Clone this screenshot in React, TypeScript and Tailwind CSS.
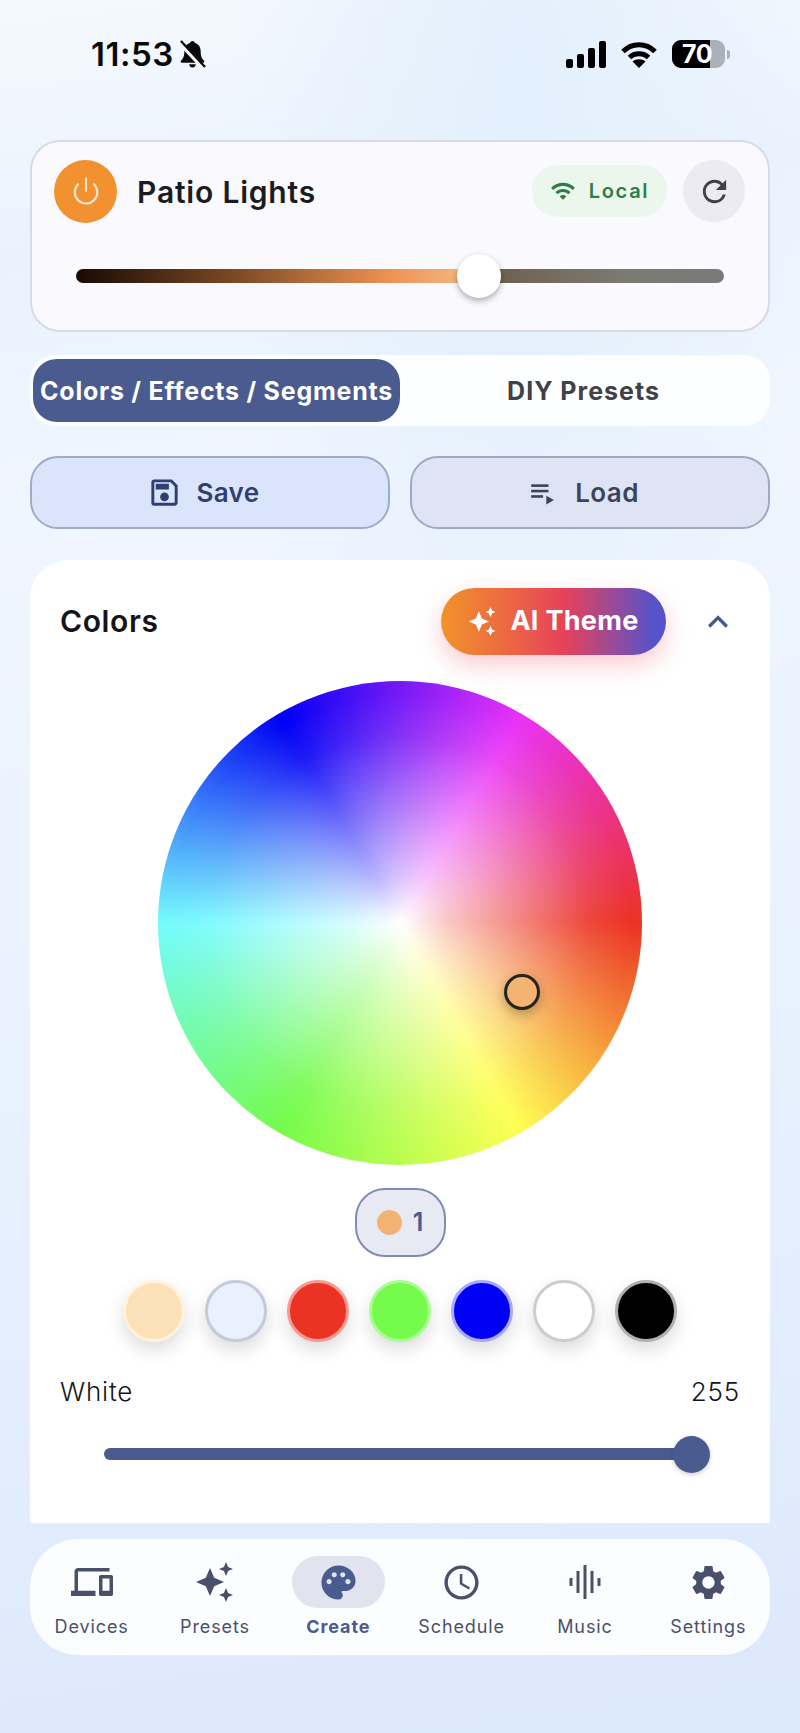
import React from "react";
import { MdDevices, MdPalette, MdSettings, MdOutlineSchedule, MdOutlineSave, MdRefresh, MdWifi, MdKeyboardArrowUp } from "react-icons/md";
import { Power } from "lucide-react";

const Star = ({ cx, cy, r }: { cx: number; cy: number; r: number }) => {
  const k = r * 0.3;
  return <path d={`M${cx} ${cy - r}L${cx + k} ${cy - k}L${cx + r} ${cy}L${cx + k} ${cy + k}L${cx} ${cy + r}L${cx - k} ${cy + k}L${cx - r} ${cy}L${cx - k} ${cy - k}Z`} />;
};

const Sparkles = ({ className }: { className: string }) => (
  <svg viewBox="0 0 40 40" fill="currentColor" className={className}>
    <Star cx={15} cy={20} r={14} />
    <Star cx={31} cy={7} r={7} />
    <Star cx={31} cy={33} r={7} />
  </svg>
);

const BellSlash = () => (
  <svg viewBox="0 0 28 30" className="w-[27px] h-[29px]" fill="#0a0a0a">
    <path d="M14 1c1.5 0 2.4 1 2.6 2.2C20.6 4.3 22.5 7.6 22.5 12c0 5 1.3 7.4 3.5 9.6.6.7.2 1.9-.9 1.9H2.900c-1.100 0-1.500-1.200-.9-1.900C4.200 19.400 5.500 17 5.500 12c0-4.400 1.900-7.700 5.900-8.800C11.600 2 12.500 1 14 1z" />
    <path d="M10.500 25h7c-.3 2-1.700 3.500-3.500 3.500S10.800 27 10.500 25z" />
    <path d="M0.500 2 L25.500 29" stroke="#f2f8fe" strokeWidth="5" />
    <path d="M2 1 L27 28" stroke="#0a0a0a" strokeWidth="2.400" />
  </svg>
);

const Swatch = ({ fill, ring }: { fill: string; ring: string }) => (
  <div className={`w-[62px] h-[62px] rounded-full border-[3px] shadow-[0_8px_18px_rgba(0,0,0,0.14)] ${fill} ${ring}`} />
);

const NavItem = ({ label, active, children }: { label: string; active?: boolean; children: React.ReactNode }) => (
  <div className="flex flex-col items-center w-[123.5px]">
    <div className={`w-[93px] h-[52px] rounded-full flex items-center justify-center ${active ? "bg-[#e1e4ee] text-[#4a5b8f]" : "text-[#4a5069]"}`}>
      {children}
    </div>
    <span className={`mt-[7px] text-[18px] leading-[24px] tracking-[0.9px] ${active ? "font-bold text-[#4a5b8f]" : "font-normal text-[#4a5069]"}`}>
      {label}
    </span>
  </div>
);

export default function App() {
  return (
    <div className="w-[800px] h-[1733px] overflow-hidden px-[30px] bg-[radial-gradient(ellipse_at_65%_6%,#e2effc_0%,rgba(226,239,252,0)_38%),linear-gradient(172deg,#f4f9fe_0%,#eaf3fd_14%,#eff6ff_28%,#e8f1fe_60%,#dce8fb_100%)] font-['Inter','Liberation_Sans',sans-serif]">
      {/* status bar */}
      <div className="h-[140px] pt-[36px] pl-[61px] pr-[40px] flex justify-between items-start">
        <div className="flex items-center gap-[5px] h-[36px]">
          <span className="text-[33px] leading-[36px] font-semibold text-[#0a0a0a] tracking-[0.5px]">11:53</span>
          <BellSlash />
        </div>
        <div className="flex items-center h-[36px]">
          <svg viewBox="0 0 41 27" className="w-[41px] h-[27px]" fill="#000">
            <rect x="0" y="18" width="7" height="9" rx="2" />
            <rect x="11" y="13" width="7" height="14" rx="2" />
            <rect x="22" y="7" width="7" height="20" rx="2" />
            <rect x="33" y="0" width="7" height="27" rx="2" />
          </svg>
          <svg viewBox="0 0 36 27" className="w-[36px] h-[27px] ml-[14px]" fill="none" stroke="#000">
            <path d="M2 10.500C11 1.500 25 1.500 34 10.500" strokeWidth="5" />
            <path d="M8.500 16.500C13.500 11.500 22.500 11.500 27.500 16.500" strokeWidth="5" />
            <path d="M18 27L11.500 20.500C15 17.500 21 17.500 24.500 20.500Z" fill="#000" stroke="none" />
          </svg>
          <div className="ml-[15px] w-[53px] h-[28px] rounded-[9px] overflow-hidden relative bg-[#aab1ba] flex">
            <div className="w-[38px] h-full bg-black" />
            <span className="absolute left-[10px] top-0 text-[25px] leading-[28px] font-bold text-white tracking-[-0.5px]">70</span>
          </div>
          <div className="ml-[2px] w-[3px] h-[9px] rounded-r-full bg-[#aab1ba]" />
        </div>
      </div>

      {/* device card */}
      <div className="h-[192px] rounded-[30px] border-2 border-[#d6dbe8] bg-[#f9f9fe] pt-[18px] pl-[22px] pr-[23px]">
        <div className="flex items-center h-[62px]">
          <div className="w-[63px] h-[63px] rounded-full bg-[#f19130] flex items-center justify-center">
            <Power className="w-[30px] h-[30px] text-[#fbe7cf]" strokeWidth={1.7} />
          </div>
          <span className="ml-[20px] pt-[2px] text-[30px] font-semibold text-[#1b1c22] tracking-[0.8px]">Patio Lights</span>
          <div className="ml-auto w-[135px] h-[52px] rounded-full bg-[#ebf6ed] flex items-center justify-center gap-[13px] text-[#2f7d46]">
            <MdWifi className="w-[26px] h-[26px]" />
            <span className="text-[20px] font-semibold tracking-[1.7px]">Local</span>
          </div>
          <div className="ml-[16px] w-[62px] h-[62px] rounded-full bg-[#ecebf2] flex items-center justify-center text-[#3f4146]">
            <MdRefresh className="w-[35px] h-[35px]" />
          </div>
        </div>
        <div className="relative mt-[47px] ml-[22px] w-[648px] h-[14px] rounded-full bg-[linear-gradient(90deg,#170b03_0%,#7a4822_24%,#ec9150_48%,#f3b681_60%,#6d5a46_60%,#7b7b73_85%,#7a7a7a_100%)]">
          <div className="absolute left-[381px] top-[-15px] w-[44px] h-[44px] rounded-full bg-white shadow-[0_3px_6px_rgba(0,0,0,0.3)]" />
        </div>
      </div>

      {/* tabs */}
      <div className="mt-[23px] h-[71px] rounded-[26px] bg-white/90 p-[3px] pt-[4px] flex">
        <div className="w-[367px] h-[63px] pt-[2px] rounded-[24px] bg-[#4a5b8f] text-white flex items-center justify-center text-[25px] font-bold tracking-[0.75px] whitespace-nowrap">
          Colors / Effects / Segments
        </div>
        <div className="flex-1 h-[63px] pt-[2px] flex items-center justify-center text-[25px] font-bold text-[#404247] tracking-[1px]">
          DIY Presets
        </div>
      </div>

      {/* save / load */}
      <div className="mt-[30px] flex gap-[20px]">
        <div className="w-[360px] h-[73px] rounded-[28px] border-2 border-[#9eabc9] bg-[#dae4fa] flex items-center justify-center gap-[14px] pr-[13px] text-[#2f3f73]">
          <MdOutlineSave className="w-[35px] h-[35px]" />
          <span className="text-[26px] font-semibold tracking-[0.4px]">Save</span>
        </div>
        <div className="w-[360px] h-[73px] rounded-[28px] border-2 border-[#a0a9c2] bg-[#dfe4f5] flex items-center justify-center gap-[20px] pr-[12px] text-[#3d4358]">
          <svg viewBox="0 0 24 24" className="w-[26px] h-[26px]" fill="currentColor">
            <rect x="2" y="4" width="16" height="2.400" />
            <rect x="2" y="9" width="16" height="2.400" />
            <rect x="2" y="14" width="11" height="2.400" />
            <path d="M16 14.500L23 18.500L16 22.500Z" />
          </svg>
          <span className="text-[26px] font-semibold tracking-[0.4px]">Load</span>
        </div>
      </div>

      {/* colors card */}
      <div className="mt-[31px] h-[963px] rounded-t-[38px] bg-white px-[30px] pt-[28px]">
        <div className="flex items-center h-[67px]">
          <span className="text-[30px] font-semibold text-[#14151a] tracking-[0.6px]">Colors</span>
          <div className="ml-auto w-[225px] h-[67px] rounded-full bg-[linear-gradient(90deg,#f1932a_0%,#e6425a_55%,#5652cb_95%)] shadow-[0_10px_24px_rgba(235,70,90,0.28)] flex items-center justify-center gap-[13px] text-white">
            <Sparkles className="w-[29px] h-[29px]" />
            <span className="text-[27px] font-bold tracking-[0.3px]">AI Theme</span>
          </div>
          <div className="ml-[31px] mr-[1px] w-[42px] flex justify-center text-[#46588f]">
            <MdKeyboardArrowUp className="w-[40px] h-[40px]" />
          </div>
        </div>

        <div className="mt-[26px] flex justify-center">
          <div className="relative w-[484px] h-[484px] rounded-full overflow-hidden">
            <div className="absolute inset-[-20px] blur-[5px] bg-[conic-gradient(from_90deg,#eb3323,#ffff55,#75fb4c,#75fbfd,#0000f5,#ea33f7,#eb3323)]" />
            <div className="absolute inset-0 bg-[radial-gradient(closest-side,#ffffff_0%,rgba(255,255,255,0.72)_20%,rgba(255,255,255,0.4)_50%,rgba(255,255,255,0.1)_78%,rgba(255,255,255,0)_95%)]" />
            <div className="absolute left-[346px] top-[293px] w-[36px] h-[36px] rounded-full bg-[#f3b373] border-[3px] border-[#25221f] shadow-[0_4px_12px_rgba(0,0,0,0.28)]" />
          </div>
        </div>

        <div className="mt-[23px] flex justify-center">
          <div className="w-[91px] h-[69px] rounded-[30px] border-2 border-[#7f8cb3] bg-[#e8eaf3] flex items-center justify-center gap-[11px]">
            <div className="w-[25px] h-[25px] rounded-full bg-[#f3b373]" />
            <span className="text-[25px] font-semibold text-[#4a5b8f]">1</span>
          </div>
        </div>

        <div className="mt-[23px] flex justify-center gap-[20px]">
          <Swatch fill="bg-[#fce1b8]" ring="border-[#fff3df]" />
          <Swatch fill="bg-[#e8f1fd]" ring="border-[#c3cbd9]" />
          <Swatch fill="bg-[#eb3323]" ring="border-[#f59a92]" />
          <Swatch fill="bg-[#75fb4c]" ring="border-[#a9fb92]" />
          <Swatch fill="bg-[#0000f5]" ring="border-[#a9a9fb]" />
          <Swatch fill="bg-white" ring="border-[#cdcdd0]" />
          <Swatch fill="bg-black" ring="border-[#b0b0b0]" />
        </div>

        <div className="mt-[35px] flex justify-between text-[26px] leading-[30px] font-light text-[#14151a] tracking-[0.8px]">
          <span>White</span>
          <span>255</span>
        </div>

        <div className="relative mt-[41px] ml-[44px] w-[588px] h-[12px] rounded-full bg-[#4a5b8f]">
          <div className="absolute right-[-18px] top-[-12px] w-[37px] h-[37px] rounded-full bg-[#4a5b8f] shadow-[0_2px_5px_rgba(0,0,0,0.18)]" />
        </div>
      </div>

      {/* bottom nav */}
      <div className="mt-[16px] h-[116px] rounded-[48px] bg-white/90 pt-[17px] flex justify-between">
        <NavItem label="Devices"><MdDevices className="w-[42px] h-[42px]" /></NavItem>
        <NavItem label="Presets"><Sparkles className="w-[40px] h-[40px]" /></NavItem>
        <NavItem label="Create" active><MdPalette className="w-[41px] h-[41px]" /></NavItem>
        <NavItem label="Schedule"><MdOutlineSchedule className="w-[41px] h-[41px]" /></NavItem>
        <NavItem label="Music">
          <svg viewBox="0 0 32 34" className="w-[32px] h-[34px]" fill="currentColor">
            <rect x="0.500" y="13" width="3" height="8" />
            <rect x="7.500" y="6" width="3" height="22" />
            <rect x="14.500" y="0" width="3" height="34" />
            <rect x="21.500" y="6" width="3" height="22" />
            <rect x="28.500" y="13" width="3" height="8" />
          </svg>
        </NavItem>
        <NavItem label="Settings"><MdSettings className="w-[41px] h-[41px]" /></NavItem>
      </div>
    </div>
  );
}
